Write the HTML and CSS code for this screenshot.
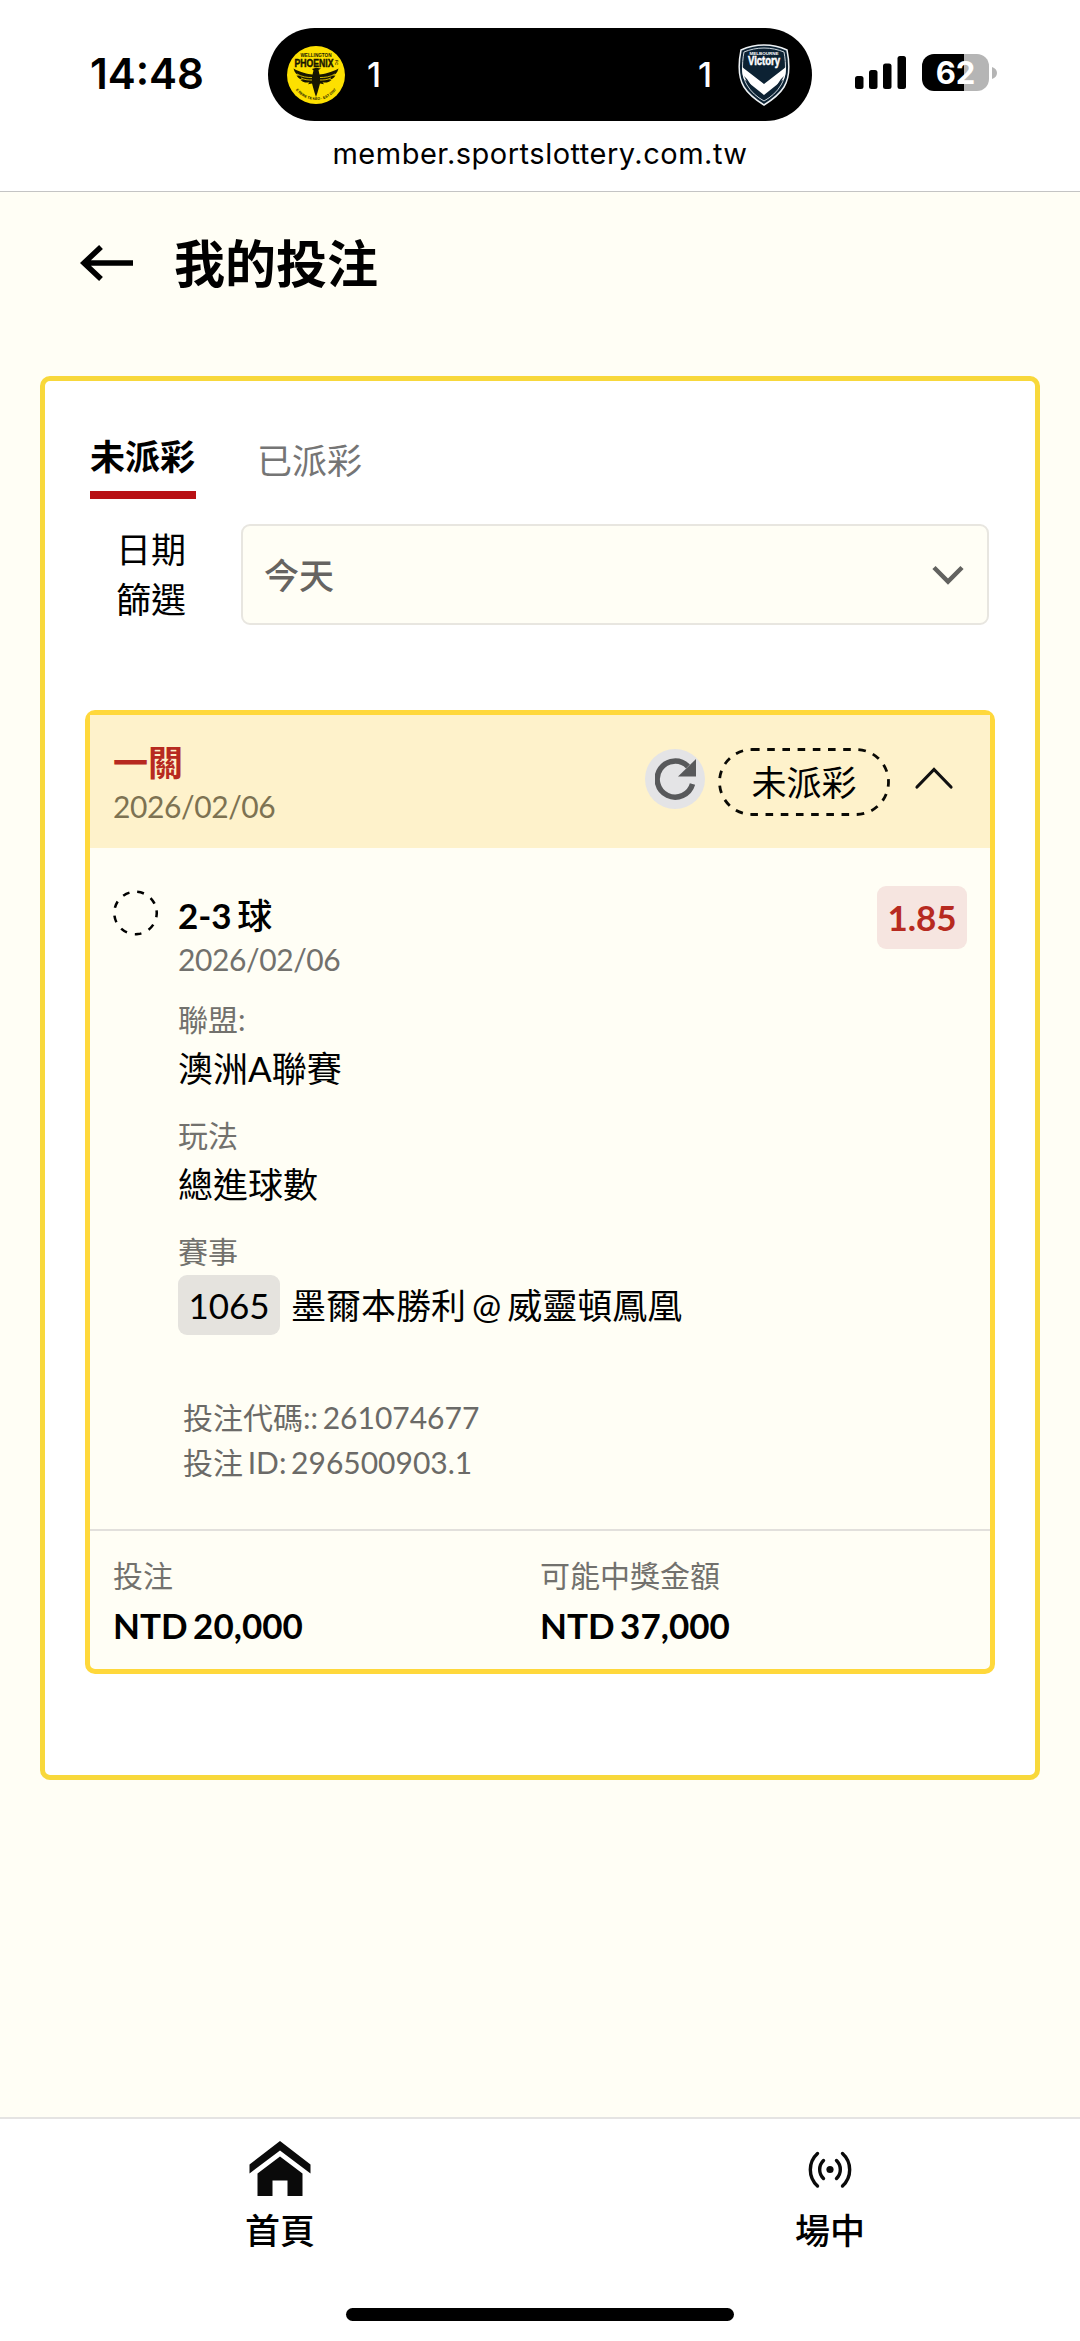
FILE: index.html
```html
<!DOCTYPE html>
<html lang="zh-Hant">
<head>
<meta charset="utf-8">
<title>我的投注</title>
<link rel="stylesheet" href="styles.css">
</head>
<body>
<div class="screen">
  <header class="system">
    <div class="status">
      <div class="time">14:48</div>
      <div class="island">
        <div class="team">
          <svg width="58" height="58" viewBox="0 0 58 58">
            <circle cx="29" cy="29" r="29" fill="#fde000"/>
            <text class="crest-text" x="29" y="11" font-size="4.6" textLength="31" lengthAdjust="spacingAndGlyphs">WELLINGTON</text>
            <text class="crest-text" x="27" y="21" font-size="11.500" textLength="39" lengthAdjust="spacingAndGlyphs" stroke="#171500" stroke-width=".5">PHOENIX</text>
            <text class="crest-text" transform="translate(48 16.5) rotate(90)" font-size="4">FC</text>
            <path fill="#171500" d="M25 23l4-1.200 5 .8-2.500 1.400 1 4.500c4.500-.5 12-2 19-6-1 4-3 6-6 7.300l3-.3c-2 3-4 4-7 4.500l3 .3c-3 2.500-6 2.500-9 2l1.500 2-4-.8-2.500 9-1.500 4.500-1.500-4.500-2.500-9-4 .8 1.500-2c-3 .5-6 .5-9-2l3-.3c-3-.5-5-1.500-7-4.500l3 .3c-3-1.300-5-3.300-6-7.300 7 4 14 5.500 19 6l1-4z"/>
            <path fill="none" stroke="#fde000" stroke-width=".8" d="M10 28c5 3 10 3.500 15 3.500M14 32c4 2 8 2 11 2M48 28c-5 3-10 3.500-15 3.500M44 32c-4 2-8 2-11 2"/>
            <path id="crest-arc" fill="none" d="M9 44a25 25 0 0 0 40 0"/>
            <text class="crest-text" font-size="3.600"><textPath href="#crest-arc" startOffset="50%">E RERE TE KEO · EST 2007</textPath></text>
          </svg>
          <span>1</span>
        </div>
        <div class="team">
          <span>1</span>
          <svg width="52" height="62" viewBox="0 0 52 62">
            <path d="M26 1c8 0 16 1.800 23 5 3 15 3 27-3 37-5 8-12 13-20 18C18 56 11 51 6 43 0 33 0 21 3 6c7-3.200 15-5 23-5z" fill="#0c2233" stroke="#eef2f5" stroke-width="1.500"/>
            <path d="M26 4c7 0 14 1.500 20 4 2.500 13 2 25-3 33-4 7-10 12-17 16C19 53 13 48 9 41 4 33 3.500 21 6 8c6-2.500 13-4 20-4z" fill="#0c2233" stroke="#cdd6dd" stroke-width="1"/>
            <path d="M4 23l22 17 22-17c0 5-.5 9-2 12L26 51 6 35c-1.500-3-2-7-2-12z" fill="#fff"/>
            <path d="M6 32l3 3 4 6-3-1zM46 32l-3 3-4 6 3-1z" fill="#0c2233"/>
            <text class="shield-text" x="26" y="10.500" font-size="4.400" textLength="29" lengthAdjust="spacingAndGlyphs">MELBOURNE</text>
            <text class="shield-text" x="26" y="21" font-size="12" textLength="32" lengthAdjust="spacingAndGlyphs" stroke="#fff" stroke-width=".5">Victory</text>
          </svg>
        </div>
      </div>
      <div class="indicators">
        <svg width="52" height="34" viewBox="0 0 52 34">
          <rect x="0" y="20" width="8.500" height="13" rx="2.500"/>
          <rect x="14" y="14" width="8.500" height="19" rx="2.500"/>
          <rect x="28" y="7.500" width="8.500" height="25.500" rx="2.500"/>
          <rect x="42.500" y="0" width="8.500" height="33" rx="2.500"/>
        </svg>
        <div class="battery">62</div>
        <svg class="nub" width="5" height="12" viewBox="0 0 5 12"><path d="M0 0c3 1 5 3 5 6s-2 5-5 6z" fill="#b5b5b5"/></svg>
      </div>
    </div>
    <div class="url">member.sportslottery.com.tw</div>
  </header>

  <main class="page">
    <div class="page-head">
      <svg width="54" height="36" viewBox="0 0 54 36" fill="none" stroke="#000" stroke-width="5.500"><path d="M53 18H5M21 2L4 18l17 16"/></svg>
      <h1>我的投注</h1>
    </div>

    <section class="panel">
      <nav class="tabs">
        <a class="tab tab-active">未派彩</a>
        <a class="tab">已派彩</a>
      </nav>
      <div class="filter">
        <div class="filter-label">日期<br>篩選</div>
        <div class="select">
          <span>今天</span>
          <svg width="32" height="20" viewBox="0 0 32 20" fill="none" stroke="#62625f" stroke-width="4.500"><path d="M2 2.500l14 14 14-14"/></svg>
        </div>
      </div>

      <article class="bet">
        <div class="bet-head">
          <div class="bet-name">
            <div class="legs">一關</div>
            <div class="date date-head">2026/02/06</div>
          </div>
          <div class="refresh">
            <svg width="42" height="42" viewBox="0 0 42 42"><path d="M37.500 26A18 18 0 1 1 33 8.500" fill="none" stroke="#58595b" stroke-width="5.500"/><path d="M41 1v17.500H23z" fill="#58595b"/></svg>
          </div>
          <div class="pill">
            <svg class="pill-line" width="172" height="68" viewBox="0 0 172 68"><rect x="1.500" y="1.500" width="169" height="65" rx="32.500" fill="none" stroke="#0a0a05" stroke-width="2.800" stroke-dasharray="7.600 7.600"/></svg>
            未派彩
          </div>
          <svg class="collapse" width="40" height="24" viewBox="0 0 40 24" fill="none" stroke="#111" stroke-width="3.200" stroke-linecap="round"><path d="M3 21L20 3.500 37 21"/></svg>
        </div>

        <div class="bet-body">
          <svg class="pending" width="45" height="46" viewBox="0 0 46 46"><circle cx="23" cy="23" r="21.700" fill="none" stroke="#000" stroke-width="2.600" stroke-dasharray="7 8.150" transform="rotate(-7 23 23)"/></svg>
          <div class="details">
            <div class="pick">2-3 <span class="unit">球</span></div>
            <div class="date">2026/02/06</div>
            <dl class="facts">
              <div class="fact"><dt>聯盟:</dt><dd>澳洲A聯賽</dd></div>
              <div class="fact"><dt>玩法</dt><dd>總進球數</dd></div>
              <div class="fact"><dt>賽事</dt><dd class="match"><span class="match-no">1065</span><span>墨爾本勝利 @ 威靈頓鳳凰</span></dd></div>
            </dl>
            <div class="codes">
              <div>投注代碼:: 261074677</div>
              <div>投注 ID: 296500903.1</div>
            </div>
          </div>
          <div class="odds">1.85</div>
        </div>

        <div class="bet-foot">
          <div><div class="foot-label">投注</div><div class="amount">NTD 20,000</div></div>
          <div><div class="foot-label">可能中獎金額</div><div class="amount">NTD 37,000</div></div>
        </div>
      </article>
    </section>
  </main>

  <footer class="bottom">
    <nav class="bottom-nav">
      <a class="nav-item">
        <svg width="62" height="56" viewBox="0 0 62 56" fill="#0a0a0a"><path d="M31 0l30.500 23.500v9L31 9.500.5 32.500v-9z"/><path d="M31 15.500l22.500 17V55H38.500V39.500h-15V55H8.500V32.500z"/></svg>
        <span>首頁</span>
      </a>
      <a class="nav-item">
        <svg width="62" height="56" viewBox="0 0 62 56" fill="none" stroke="#0a0a0a" stroke-width="3.400" stroke-linecap="round"><circle cx="31" cy="28.500" r="3.600" fill="#0a0a0a" stroke="none"/><path d="M24.500 19.500a12.500 12.500 0 0 0 0 18M37.500 19.500a12.500 12.500 0 0 1 0 18M18.500 12.500a22 22 0 0 0 0 32.500M43.500 12.500a22 22 0 0 1 0 32.500"/></svg>
        <span>場中</span>
      </a>
    </nav>
    <div class="home-bar"></div>
  </footer>
</div>
</body>
</html>
```
FILE: styles.css
```css
* { box-sizing: border-box; }
body {
  margin: 0;
  background: #fff;
  color: #000;
  font-family: Lato, "Noto Sans CJK TC", sans-serif;
  font-size: 35px;
  word-spacing: -3px;
}
svg { display: block; flex: none; }
h1, dl, dd { margin: 0; }

.screen { width: 1080px; height: 2341px; display: flex; flex-direction: column; }

/* System bar */
.system {
  height: 192px;
  padding-top: 28px;
  border-bottom: 1px solid #c4c4c4;
  font-family: Inter, sans-serif;
}
.status { display: flex; height: 93px; }
.time {
  width: 268px;
  padding-left: 90px;
  font-size: 42px;
  font-weight: 600;
  line-height: 92px;
}
.island {
  width: 544px;
  display: flex;
  justify-content: space-between;
  align-items: center;
  padding: 0 22px 0 19px;
  border-radius: 47px;
  background: #000;
  color: #fff;
  font-size: 34px;
  font-weight: 500;
}
.team { display: flex; align-items: center; gap: 22px; }
.team:last-child { gap: 26px; }
.crest-text { font-family: "Liberation Sans", sans-serif; font-weight: 700; fill: #171500; text-anchor: middle; word-spacing: 0; }
.shield-text { font-family: "Liberation Sans", sans-serif; font-weight: 700; fill: #fff; text-anchor: middle; }
.indicators { display: flex; align-items: center; padding: 0 0 4px 43px; }
.indicators svg:first-child { margin-top: 1px; }
.battery {
  width: 67px;
  height: 37px;
  margin: -1px 3px 0 15px;
  border-radius: 12px;
  background: linear-gradient(90deg, #000 42px, #b5b5b5 42px);
  color: #fff;
  font-size: 31px;
  font-weight: 700;
  line-height: 37px;
  text-align: center;
}
.url {
  padding-top: 15px;
  font-size: 29px;
  line-height: 36px;
  letter-spacing: .5px;
  text-align: center;
}

/* Page */
.page { flex: 1; padding: 36px 40px 0; background: #fffef5; }
.page-head { display: flex; align-items: center; gap: 40px; height: 72px; padding-left: 40px; }
.page-head svg { margin-top: -2px; }
.page-head h1 { font-size: 51px; font-weight: 700; line-height: 72px; }

.panel {
  height: 1404px;
  margin-top: 76px;
  padding: 47px 40px 0;
  border: 5px solid #f8d83b;
  border-radius: 10px;
  background: #fff;
}
.tabs { display: flex; gap: 61px; height: 96px; padding-left: 5px; }
.tab { height: 71px; line-height: 64px; color: #757575; }
.tab-active { width: 106px; color: #000; font-weight: 700; line-height: 56px; border-bottom: 8px solid #b81014; }
.filter { display: flex; justify-content: space-between; padding-right: 6px; }
.filter-label { width: 132px; line-height: 50px; text-align: center; }
.select {
  width: 748px;
  height: 101px;
  display: flex;
  align-items: center;
  justify-content: space-between;
  padding: 0 23px 2px 21px;
  border: 2px solid #e8e6e0;
  border-radius: 9px;
  background: #fffef5;
  color: #666461;
  font-weight: 500;
}
.select svg { margin-top: 2px; }

/* Bet card */
.bet {
  height: 964px;
  margin-top: 85px;
  border: 5px solid #ffd83b;
  border-radius: 10px;
  background: #fffef5;
}
.bet-head {
  display: flex;
  height: 133px;
  padding: 0 36px 0 23px;
  background: #fef2cb;
}
.bet-name { flex: 1; padding-top: 23px; }
.legs { color: #b72a20; font-weight: 700; line-height: 48px; }
.date { color: #72716d; font-size: 30px; line-height: 45px; letter-spacing: -.4px; }
.date-head { line-height: 40px; color: #7d7252; }
.refresh {
  width: 60px;
  height: 60px;
  margin: 34px 13px 0 0;
  padding: 9px 0 0 10px;
  border-radius: 50%;
  background: #e4e4e6;
}
.pill {
  position: relative;
  width: 172px;
  height: 68px;
  margin: 33px 24px 0 0;
  line-height: 68px;
  text-align: center;
}
.pill-line { position: absolute; top: 0; left: 0; }
.collapse { margin-top: 51px; }

.bet-body { display: flex; height: 681px; padding: 38px 23px 0; }
.pending { margin-top: 4px; }
.details { flex: 1; padding: 7px 0 0 20px; }
.pick { font-weight: 700; line-height: 45px; }
.unit { font-weight: 500; }
.details .date { margin-top: -1px; }
.facts { margin-top: 17px; display: grid; row-gap: 19px; }
dt, .foot-label { color: #72716d; font-size: 30px; }
dt { line-height: 41px; }
dd { line-height: 56px; }
.match { display: flex; gap: 11px; padding-top: 3px; line-height: 60px; }
.match-no { width: 102px; border-radius: 9px; background: #e5e3de; text-align: center; }
.codes { padding: 60px 0 0 5px; color: #6b6a67; font-size: 30px; line-height: 45px; }
.odds {
  width: 90px;
  height: 63px;
  border-radius: 9px;
  background: #f6e5e0;
  color: #b72a20;
  font-weight: 700;
  line-height: 63px;
  text-align: center;
}
.bet-foot {
  display: grid;
  grid-template-columns: 427px 1fr;
  padding: 19px 23px 0;
  border-top: 2px solid #e2e0dc;
  line-height: 50px;
}
.amount { font-weight: 700; }

/* Bottom bar */
.bottom { height: 224px; border-top: 2px solid #e5e4e3; background: #fff; }
.bottom-nav { display: flex; gap: 474px; padding: 22px 0 0 242px; }
.nav-item {
  width: 76px;
  display: flex;
  flex-direction: column;
  align-items: center;
  gap: 8px;
  font-weight: 500;
  line-height: 50px;
}
.home-bar { width: 388px; height: 13px; margin: 53px auto 0; border-radius: 7px; background: #000; }
```
